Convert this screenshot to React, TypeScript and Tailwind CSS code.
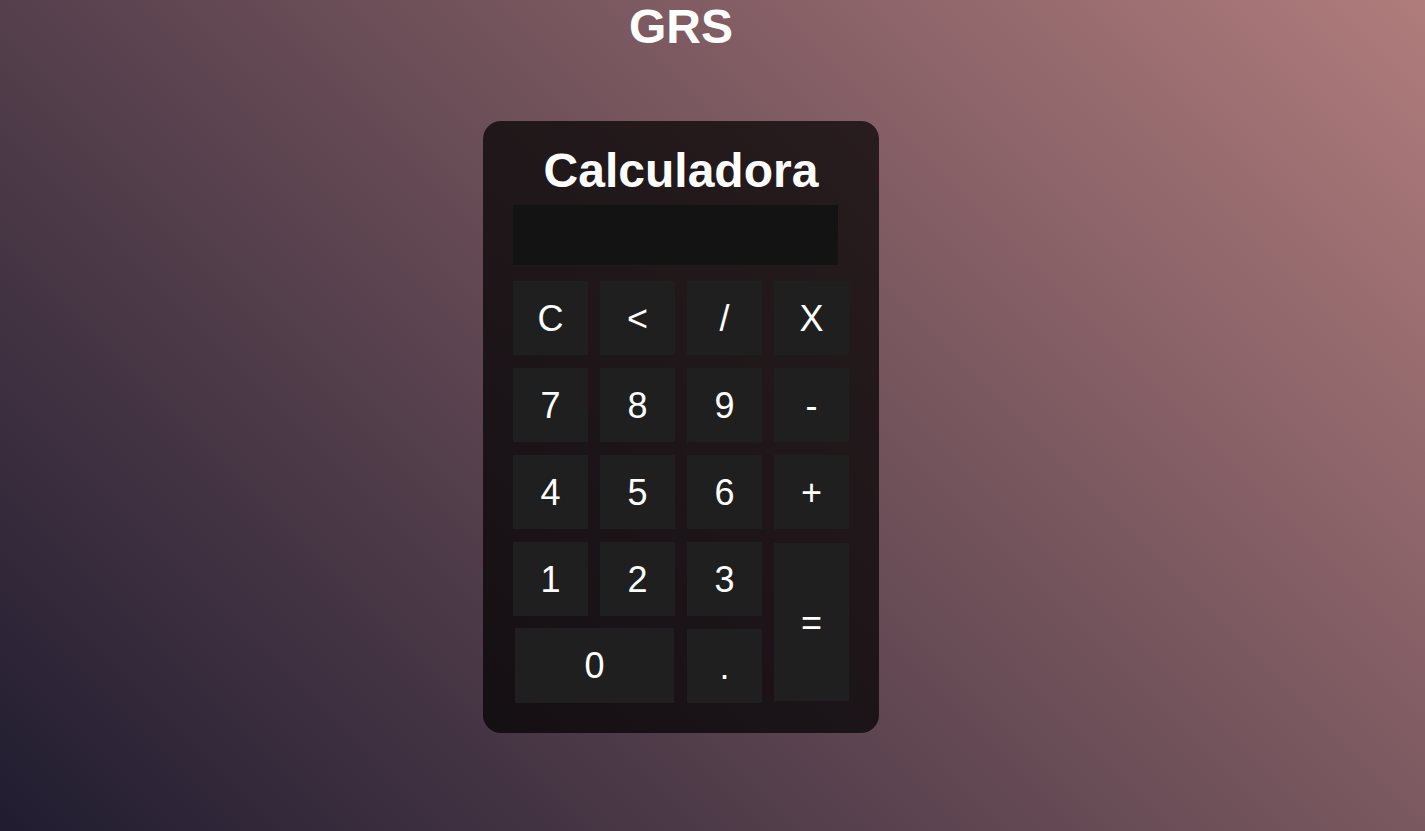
import React from 'react';

const keys: { label: string; className?: string }[] = [
  { label: 'C' },
  { label: '<' },
  { label: '/' },
  { label: 'X' },
  { label: '7' },
  { label: '8' },
  { label: '9' },
  { label: '-' },
  { label: '4' },
  { label: '5' },
  { label: '6' },
  { label: '+' },
  { label: '1' },
  { label: '2' },
  { label: '3' },
  { label: '=', className: 'row-span-2 mt-[1px] mb-[2px]' },
  { label: '0', className: 'col-span-2 ml-[2px] mr-[1px] -mt-[1px] h-[75px]' },
  { label: '.' },
];

export default function App() {
  return (
    <div
      className="min-h-screen w-full bg-[linear-gradient(45deg,#201c30,#b07c7c)] text-white"
      style={{ fontFamily: '"Liberation Sans", Arial, sans-serif' }}
    >
      <div className="w-[1362px] flex flex-col items-center">
        <h1 className="pt-[3px] text-[48px] leading-[48px] font-bold">GRS</h1>

        <div className="mt-[70px] w-[396px] rounded-[18px] bg-black/70 px-[30px] pt-[26px] pb-[30px]">
          <h2 className="text-center text-[48px] leading-[48px] font-bold">Calculadora</h2>
          <div className="mt-[10px] h-[60px] w-[325px] bg-[#131313]" />

          <div className="mt-[16px] grid grid-cols-[repeat(4,75px)] auto-rows-[74px] gap-x-[12px] gap-y-[13px]">
            {keys.map((k) => (
              <button
                key={k.label}
                className={`flex items-center justify-center bg-[#1f1f1f] pt-[1px] text-[36px] leading-none text-white ${k.className ?? ''}`}
              >
                {k.label}
              </button>
            ))}
          </div>
        </div>
      </div>
    </div>
  );
}
